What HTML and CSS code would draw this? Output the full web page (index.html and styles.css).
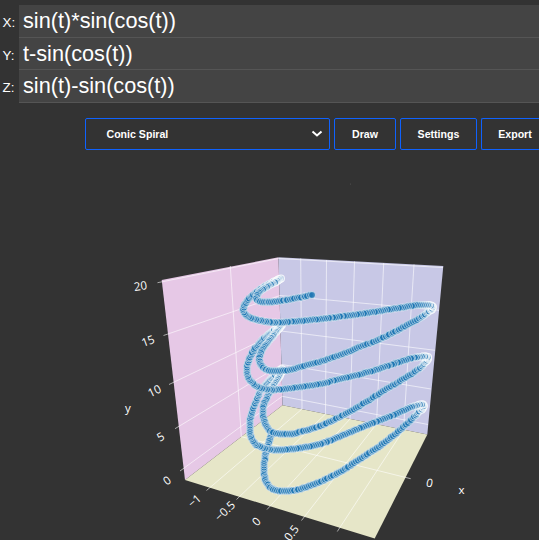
FILE: index.html
```html
<!DOCTYPE html>
<html lang="en">
<head>
<meta charset="utf-8">
<title>Parametric plot</title>
<link rel="stylesheet" href="styles.css">
</head>
<body>
<form class="formulas">
  <label class="row"><span class="axis">X:</span><span class="field">sin(t)*sin(cos(t))</span></label>
  <label class="row middle"><span class="axis">Y:</span><span class="field">t-sin(cos(t))</span></label>
  <label class="row"><span class="axis">Z:</span><span class="field">sin(t)-sin(cos(t))</span></label>
</form>
<div class="toolbar">
  <div class="control preset">Conic Spiral
    <svg class="chevron" width="12" height="8" viewBox="0 0 12 8"><path d="M1.5 1.5 6 5.5 10.5 1.5"/></svg>
  </div>
  <div class="control draw">Draw</div>
  <div class="control settings">Settings</div>
  <div class="control export">Export</div>
</div>
<svg class="plot" width="539" height="390" viewBox="0 150 539 390">
  <path class="wall-left" d="M161.7 280 278.5 257.3 282.5 405.3 185 480Z"/>
  <path class="wall-back" d="M278.5 257.3 443.3 266 427.3 434.5 282.5 405.3Z"/>
  <path class="floor" d="M282.5 405.3 427.3 434.5 374.7 538.6 185 480Z"/>
  <path class="grid" d="M157.5 282.7 278.5 258.5 443 267.5M163.5 335.5 280 295.5 439 310.3M169 384.5 281 331 435 350.3M175 428.7 281.5 364.5 431 389M180 471 282.3 396.3 428 424.5M230.3 266 241.3 436.7 410.7 478.7M300.7 258.5 302 409 206.5 490.5M326.5 260 325.5 414 236.5 499.5M354.5 261.5 350 419 267 509.5M383.7 263 376.5 424 301.5 520.5M414 264.5 403.5 430 337.3 531.5"/>
  <g id="curve"></g>
  <g class="labels">
    <text transform="translate(140.5 286) rotate(-8)" y="4">20</text>
    <text transform="translate(148 341) rotate(-20)" y="4">15</text>
    <text transform="translate(154.5 391) rotate(-26)" y="4">10</text>
    <text transform="translate(160.5 437) rotate(-30)" y="4">5</text>
    <text transform="translate(167 480.5) rotate(-36)" y="4">0</text>
    <text x="127.8" y="412">y</text>
    <text transform="translate(194.5 501) rotate(-41)" y="4">−1</text>
    <text transform="translate(225 511) rotate(-44)" y="4">−0.5</text>
    <text transform="translate(256.5 521.5) rotate(-46)" y="4">0</text>
    <text transform="translate(291.5 533) rotate(-52)" y="4">0.5</text>
    <text transform="translate(429.5 483) rotate(12)" y="4">0</text>
    <text x="461.5" y="494">x</text>
  </g>
  <circle class="speck" cx="350.5" cy="184" r=".6"/>
</svg>
<script src="plot.js"></script>
</body>
</html>
```
FILE: styles.css
```css
* { box-sizing: border-box; }
body {
  margin: 0;
  height: 540px;
  overflow: hidden;
  background: #333;
  color: #fff;
  font-family: "Liberation Sans", Arial, sans-serif;
}
.formulas { padding-top: 5px; height: 118px; }
.row { display: flex; height: 33px; }
.row.middle { height: 32px; }
.axis { width: 19px; padding: 10px 0 0 2.5px; font-size: 13.4px; line-height: 16px; }
.field {
  flex: 1;
  padding-left: 4px;
  background: #444;
  border-bottom: 1px solid #555;
  font-size: 21.7px;
  line-height: 31px;
  white-space: nowrap;
}
.toolbar { display: flex; gap: 4px; padding-left: 85px; width: 539px; height: 32px; overflow: hidden; }
.control {
  flex: none;
  display: flex;
  align-items: center;
  justify-content: center;
  border: 1px solid #0f62fe;
  border-radius: 2px;
  font-size: 10.6px;
  font-weight: bold;
}
.preset { width: 245px; padding: 0 6px 0 20.5px; justify-content: space-between; }
.draw { width: 62px; }
.settings { width: 77px; }
.export { width: 58px; border-right: 0; border-radius: 2px 0 0 2px; padding-left: 9px; }
.chevron path { fill: none; stroke: #fff; stroke-width: 2; }
.plot { display: block; }
.wall-left { fill: #e6c8e6; }
.wall-back { fill: #c8c8e6; }
.floor { fill: #e6e6c8; }
.grid { fill: none; stroke: #fff; stroke-opacity: .65; stroke-width: .9; }
.marker { fill: #1f77b4; stroke: #fff; }
.labels { fill: #fff; font: 11.5px "Open Sans", sans-serif; text-anchor: middle; }
.speck { fill: #555; }
```
FILE: plot.js
```js
// Projected control points of the spiral, from t = 0 upward.
const points = [
  [272,433],[269,442],[265,457],[264.5,477],[270,487],[277,490.5],[288,491],[300,489],[320,482],
  [340,472],[360,459],[380,446],[400,430],[413,418],[424,405.5],[413,406.5],[390,416.5],[370,424],
  [340,436.5],[320,444],[300,448],[280,450],[268,449],[256.7,445],[250.5,435],[250,420],[254,407],
  [263,388],[283,369],[271,390],[263,408],[265,423],[273,432.5],[290,434],[300,432],[320,426],
  [340,416.7],[360,405.7],[390,387],[410,375],[423,365],[428,357],[413,358],[390,365],[370,371.7],
  [340,379],[320,384],[300,387],[280,389.5],[268,389.5],[256.7,386.5],[248,377],[247,366],[253,351.7],
  [266,336.7],[282,325],[271,338],[262,350],[259.5,361],[265,369],[274,371],[290,370],[300,367],
  [320,361.7],[340,355],[360,347],[380,339],[400,329],[420,318],[433,307],[420,305],[400,307.7],
  [380,311],[360,314],[340,316.7],[320,319],[300,321],[280,322.5],[266,321.7],[251,318],[244,313],
  [244,306],[250,298],[263,287.5],[281.5,278.5],[262,290],[256.5,297],[259,301],[270,302],[290,299.5],[313,294.5]
];
// Turning points, where samples crowd together: x, y, reach.
const tips = [[283,369,38],[282,325,34],[281.5,278.5,32],[424,405.5,18],[428,357,18],[433,307,18]]
  .map(t => [...t, points.findIndex(p => p[0] === t[0] && p[1] === t[1])]);
const curve = document.getElementById("curve");
const spline = (a, b, c, d, u) =>
  .5 * (2 * b + (c - a) * u + (2 * a - 5 * b + 4 * c - d) * u * u + (3 * b - a - 3 * c + d) * u * u * u);
const at = i => points[Math.max(0, Math.min(points.length - 1, i))];

let last = null;
let count = 0;
for (let i = 0; i < points.length - 1; i++) {
  for (let u = 0; u <= 1; u += .01) {
    const [x, y] = [0, 1].map(k => spline(at(i - 1)[k], at(i)[k], at(i + 1)[k], at(i + 2)[k], u));
    const near = Math.max(0, ...tips
      .filter(t => Math.abs(i + u - t[3]) <= 3)
      .map(t => 1 - Math.hypot(x - t[0], y - t[1]) / t[2]));
    const step = (x < 275 ? 1.7 : 2.1) + .4 * Math.sin(count * 2.3);
    if (last && Math.hypot(x - last[0], y - last[1]) < step * (1 - .4 * near)) continue;
    last = [x, y];
    count++;
    const dot = document.createElementNS("http://www.w3.org/2000/svg", "circle");
    dot.setAttribute("class", "marker");
    dot.setAttribute("cx", Math.round(x));
    dot.setAttribute("cy", Math.round(y * 2) / 2);
    dot.setAttribute("r", 3.45);
    dot.setAttribute("fill-opacity", .85 - .65 * near);
    dot.setAttribute("stroke-width", .75 + .35 * near);
    dot.setAttribute("stroke-opacity", .75 + .1 * near);
    curve.appendChild(dot);
  }
}
```
